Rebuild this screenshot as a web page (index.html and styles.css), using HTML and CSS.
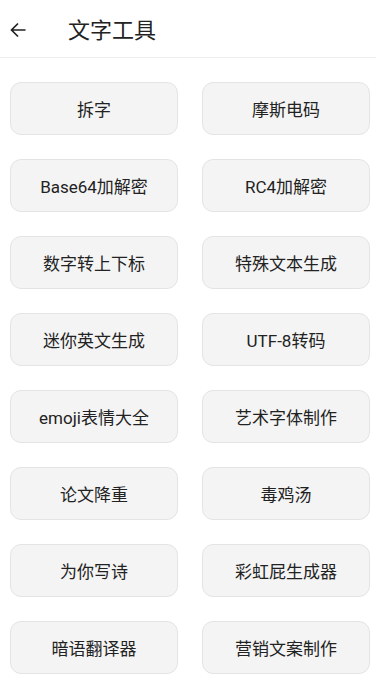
FILE: index.html
```html
<!DOCTYPE html>
<html lang="zh">
<head>
<meta charset="utf-8">
<link rel="stylesheet" href="styles.css">
</head>
<body>
<header class="bar">
  <svg class="back" width="16" height="16" viewBox="0 0 16 16"><path d="M15.5 8H1.5M8 1.5L1.5 8l6.5 6.5" fill="none" stroke="#222" stroke-width="1.7"/></svg>
  <h1 class="title">文字工具</h1>
</header>
<main class="grid">
  <div class="btn">拆字</div>
  <div class="btn">摩斯电码</div>
  <div class="btn">Base64加解密</div>
  <div class="btn">RC4加解密</div>
  <div class="btn">数字转上下标</div>
  <div class="btn">特殊文本生成</div>
  <div class="btn">迷你英文生成</div>
  <div class="btn">UTF-8转码</div>
  <div class="btn">emoji表情大全</div>
  <div class="btn">艺术字体制作</div>
  <div class="btn">论文降重</div>
  <div class="btn">毒鸡汤</div>
  <div class="btn">为你写诗</div>
  <div class="btn">彩虹屁生成器</div>
  <div class="btn">暗语翻译器</div>
  <div class="btn">营销文案制作</div>
</main>
</body>
</html>
```
FILE: styles.css
```css
html, body { margin: 0; padding: 0; background: #fff; }
body { font-family: Roboto, "Noto Sans CJK SC", sans-serif; color: #222; }
.bar {
  height: 58px;
  display: flex;
  align-items: center;
  border-bottom: 1px solid #eeeeee;
  box-sizing: border-box;
  padding-left: 10px;
}
.back { margin-top: 2px; }
.title {
  margin: 0 0 0 42px;
  font-size: 22px;
  font-weight: 400;
  color: #222;
  line-height: 1;
  margin-top: 4px;
}
.grid {
  display: grid;
  grid-template-columns: 168px 168px;
  column-gap: 24px;
  row-gap: 24px;
  padding: 24px 0 0 10px;
}
.btn {
  height: 53px;
  box-sizing: border-box;
  border: 1px solid #e4e4e4;
  border-radius: 11px;
  background: #f4f4f4;
  display: flex;
  align-items: center;
  justify-content: center;
  font-size: 17px;
  color: #222;
}
```
